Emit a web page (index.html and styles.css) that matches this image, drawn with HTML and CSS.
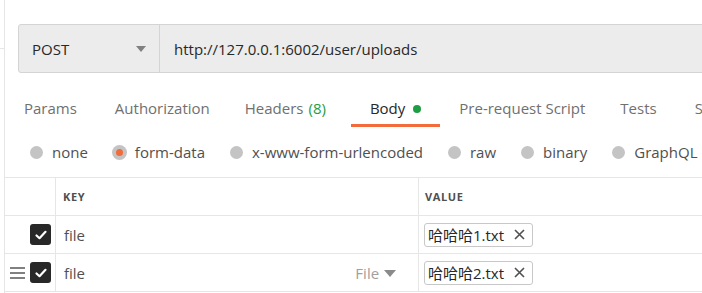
FILE: index.html
```html
<!DOCTYPE html>
<html lang="zh">
<head>
    <meta charset="UTF-8">
    <meta name="viewport" content="width=device-width, initial-scale=1.0">
    <title>POST uploads</title>
    <link rel="stylesheet" href="styles.css">
</head>
<body>
    <div class="side"></div>
    <div class="main">
        <div class="url-bar">
            <div class="method">
                <span>POST</span>
                <span class="caret"></span>
            </div>
            <div class="url">http://127.0.0.1:6002/user/uploads</div>
        </div>

        <div class="tabs">
            <div class="tab">Params</div>
            <div class="tab">Authorization</div>
            <div class="tab">Headers <span class="count">(8)</span></div>
            <div class="tab active">Body <span class="dot"></span></div>
            <div class="tab">Pre-request Script</div>
            <div class="tab">Tests</div>
            <div class="tab">Settings</div>
        </div>

        <div class="body-types">
            <label class="radio"><span class="circle"></span>none</label>
            <label class="radio"><span class="circle on"></span>form-data</label>
            <label class="radio"><span class="circle"></span>x-www-form-urlencoded</label>
            <label class="radio"><span class="circle"></span>raw</label>
            <label class="radio"><span class="circle"></span>binary</label>
            <label class="radio"><span class="circle"></span>GraphQL</label>
        </div>

        <div class="table">
            <div class="row head">
                <div class="cell check"></div>
                <div class="cell key">KEY</div>
                <div class="cell value">VALUE</div>
            </div>
            <div class="row">
                <div class="cell check">
                    <span class="box"><svg width="14" height="14" viewBox="0 0 14 14"><path d="M2.5 7.5 L5.5 10.2 L11.5 3.8" fill="none" stroke="#fff" stroke-width="2.2" stroke-linecap="round" stroke-linejoin="round"/></svg></span>
                </div>
                <div class="cell key">file</div>
                <div class="cell value">
                    <span class="chip">哈哈哈1.txt <svg class="x" width="11" height="11" viewBox="0 0 11 11"><path d="M1 1 L10 10 M10 1 L1 10" stroke="#505050" stroke-width="1.6"/></svg></span>
                </div>
            </div>
            <div class="row">
                <div class="cell check">
                    <span class="handle"></span>
                    <span class="box"><svg width="14" height="14" viewBox="0 0 14 14"><path d="M2.5 7.5 L5.5 10.2 L11.5 3.8" fill="none" stroke="#fff" stroke-width="2.2" stroke-linecap="round" stroke-linejoin="round"/></svg></span>
                </div>
                <div class="cell key">file <span class="type">File <span class="caret small"></span></span></div>
                <div class="cell value">
                    <span class="chip">哈哈哈2.txt <svg class="x" width="11" height="11" viewBox="0 0 11 11"><path d="M1 1 L10 10 M10 1 L1 10" stroke="#505050" stroke-width="1.6"/></svg></span>
                </div>
            </div>
        </div>
    </div>
</body>
</html>
```

FILE: styles.css
```css
body {
    margin: 0;
    background: #fff;
    font-family: "Open Sans", "Noto Sans", sans-serif;
    font-size: 15px;
    color: #505050;
    display: flex;
    height: 293px;
    overflow: hidden;
}
.side {
    width: 4px;
    height: 48px;
    border-bottom: 1px solid #e6e6e6;
    flex-shrink: 0;
}
.main {
    flex: 1;
    border-left: 1px solid #e6e6e6;
    overflow: hidden;
}
.url-bar {
    display: flex;
    margin: 24px 0 0 13px;
    height: 47px;
    width: 720px;
    background: #ececec;
    border: 1px solid #d4d4d4;
    border-radius: 3px;
}
.method {
    width: 127px;
    padding-left: 13px;
    display: flex;
    align-items: center;
    justify-content: space-between;
    border-right: 1px solid #d4d4d4;
    color: #282828;
}
.caret {
    width: 0;
    height: 0;
    margin-right: 13px;
    border-left: 5px solid transparent;
    border-right: 5px solid transparent;
    border-top: 6px solid #808080;
}
.caret.small {
    display: inline-block;
    margin: 0 0 2px 1px;
    border-left-width: 6px;
    border-right-width: 6px;
    border-top: 7px solid #8a8a8a;
}
.url {
    display: flex;
    align-items: center;
    padding-left: 14px;
    color: #282828;
}
.tabs {
    display: flex;
    height: 54px;
    white-space: nowrap;
}
.tab {
    padding: 18px 19px 0;
    display: flex;
    align-items: center;
    gap: 5px;
    color: #707070;
    border-bottom: 3px solid transparent;
}
.tab:nth-child(2) {
    padding-right: 18px;
}
.tab:nth-child(3) {
    padding-left: 17px;
    padding-right: 25px;
}
.tab:nth-child(5) {
    padding-right: 16px;
}
.tab.active {
    color: #282828;
    border-bottom-color: #f26b3a;
}
.count {
    color: #1f9d3e;
}
.dot {
    width: 8px;
    height: 8px;
    border-radius: 50%;
    background: #1e9e43;
    margin-left: 3px;
    margin-top: 2px;
}
.body-types {
    display: flex;
    align-items: center;
    height: 50px;
    padding-left: 25px;
    white-space: nowrap;
}
.radio {
    display: flex;
    align-items: center;
    margin-right: 25px;
}
.circle {
    width: 13px;
    height: 13px;
    border-radius: 50%;
    background: #c4c4c4;
    margin-right: 9px;
    position: relative;
}
.circle.on {
    width: 15px;
    height: 15px;
    margin-left: -1px;
    margin-right: 8px;
}
.circle.on::after {
    content: "";
    position: absolute;
    left: 4px;
    top: 4px;
    width: 7px;
    height: 7px;
    border-radius: 50%;
    background: #f26b3a;
}
.table {
    border-top: 1px solid #e6e6e6;
}
.row {
    display: flex;
    height: 37px;
    border-bottom: 1px solid #e6e6e6;
}
.cell {
    display: flex;
    align-items: center;
}
.check {
    width: 51px;
    border-right: 1px solid #e6e6e6;
    justify-content: flex-end;
    gap: 5px;
    padding-right: 4px;
    box-sizing: border-box;
}
.key {
    width: 363px;
    border-right: 1px solid #e6e6e6;
    padding-left: 8px;
    box-sizing: border-box;
    justify-content: space-between;
}
.value {
    padding-left: 5px;
}
.head .cell {
    font-size: 11px;
    font-weight: 700;
    color: #505050;
    letter-spacing: 0.6px;
    padding-left: 7px;
}
.head .check,
.head .value {
    padding-left: 6px;
}
.box {
    width: 21px;
    height: 21px;
    border-radius: 3px;
    background: #282828;
    display: flex;
    align-items: center;
    justify-content: center;
}
.handle {
    width: 15px;
    height: 2px;
    background: #808080;
    box-shadow: 0 -5px 0 #808080, 0 5px 0 #808080;
}
.type {
    color: #a0a0a0;
    padding-right: 22px;
}
.chip {
    border: 1px solid #c8c8c8;
    border-radius: 3px;
    padding: 0 7px 0 3px;
    height: 22px;
    display: flex;
    align-items: center;
    color: #282828;
    font-family: "Open Sans", "Noto Sans CJK SC", sans-serif;
    white-space: nowrap;
}
.x {
    margin-left: 10px;
}
```
